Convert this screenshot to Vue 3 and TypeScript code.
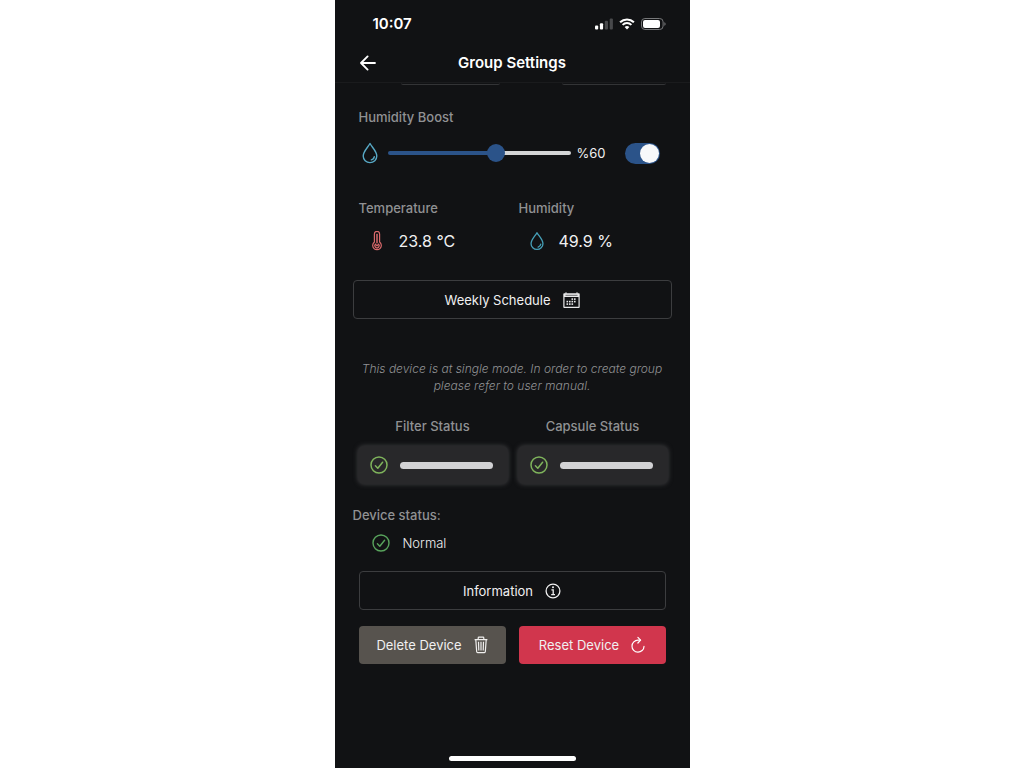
<script setup lang="ts">
import { ref, computed } from 'vue'

const boost = ref(60)
const boostOn = ref(true)
const fill = computed(() => ({ '--fill': `${boost.value}%` }))
const statuses = ['Filter Status', 'Capsule Status']
</script>

<template>
  <main class="phone">
    <div class="status-bar">
      <span class="time">10:07</span>
      <div class="indicators">
        <svg width="18" height="12" viewBox="0 0 18 12" aria-hidden="true">
          <rect x="0" y="7.5" width="3.2" height="4" rx="1" fill="#fff" />
          <rect x="4.9" y="5.3" width="3.2" height="6.2" rx="1" fill="#fff" />
          <rect x="9.8" y="2.8" width="3.2" height="8.7" rx="1" fill="#48494b" />
          <rect x="14.7" y="0.4" width="3.2" height="11.1" rx="1" fill="#48494b" />
        </svg>
        <svg width="16" height="12" viewBox="0 0 16 12" aria-hidden="true" fill="none" stroke="#fff">
          <path d="M1.1 4.3a9.9 9.9 0 0 1 13.8 0" stroke-width="2.1" />
          <path d="M3.6 6.9a6.3 6.3 0 0 1 8.8 0" stroke-width="2" />
          <path d="M8 11.6 5.6 9.1a3.5 3.5 0 0 1 4.8 0z" fill="#fff" stroke="none" />
        </svg>
        <svg width="25" height="12" viewBox="0 0 25 12" aria-hidden="true">
          <rect x="0.5" y="0.5" width="21.6" height="11" rx="3.4" fill="none" stroke="#77787a" />
          <rect x="2" y="2" width="17" height="8" rx="2" fill="#fff" />
          <path d="M23.4 4.2v3.6c.8-.3 1.2-1 1.2-1.8s-.4-1.5-1.2-1.8z" fill="#77787a" />
        </svg>
      </div>
    </div>

    <header class="nav">
      <button class="back" type="button" aria-label="Back">
        <svg width="16" height="16" viewBox="0 0 16 16" fill="none" stroke="#fff" stroke-width="1.8" stroke-linecap="round" stroke-linejoin="round">
          <path d="M15 8H1.2M7.6 1.4 1 8l6.6 6.6" />
        </svg>
      </button>
      <h1>Group Settings</h1>
    </header>

    <div class="fields-edge"><i></i><i></i></div>

    <section class="inset boost">
      <label class="caption" for="boost">Humidity Boost</label>
      <div class="boost-row">
        <svg class="drop" width="16" height="22" viewBox="0 0 16 22" fill="none" stroke="#58a9c6" stroke-width="1.4" stroke-linecap="round" stroke-linejoin="round">
          <path d="M8 1.5C6 5.2 1.2 9.4 1.2 14a6.8 6.6 0 0 0 13.6 0C14.8 9.4 10 5.2 8 1.5z" />
          <path d="M12.3 14.6a4 4 0 0 1-3 3.3" />
        </svg>
        <input id="boost" v-model.number="boost" class="slider" type="range" min="0" max="100" :style="fill" />
        <output for="boost">%{{ boost }}</output>
        <input v-model="boostOn" class="toggle" type="checkbox" role="switch" aria-label="Humidity Boost on" />
      </div>
    </section>

    <section class="inset readings">
      <div>
        <h2 class="caption">Temperature</h2>
        <p class="reading">
          <svg width="14" height="20" viewBox="0 0 14 20" fill="none" stroke="#d9696b" stroke-width="1.2" stroke-linecap="round">
            <path d="M4.4 11V3a2.6 2.6 0 0 1 5.2 0v8a4.3 4.3 0 1 1-5.2 0z" />
            <path d="M7 3.4v8.3" stroke-width="1.5" />
            <path d="M5.3 13.2a2.2 2.2 0 1 0 3.4 0L7 14.6z" />
          </svg>
          23.8 °C
        </p>
      </div>
      <div>
        <h2 class="caption">Humidity</h2>
        <p class="reading">
          <svg width="14" height="20" viewBox="0 0 16 22" fill="none" stroke="#46a0b8" stroke-width="1.5" stroke-linecap="round" stroke-linejoin="round">
            <path d="M8 1.5C6 5.2 1.2 9.4 1.2 14a6.8 6.6 0 0 0 13.6 0C14.8 9.4 10 5.2 8 1.5z" />
            <path d="M12.3 14.6a4 4 0 0 1-3 3.3" />
          </svg>
          49.9 %
        </p>
      </div>
    </section>

    <button class="outline weekly" type="button">
      Weekly Schedule
      <svg width="17" height="16" viewBox="0 0 17 16">
        <path d="M2.5 0.3h1v.9h10v-.9h1v.9h1.3q.9 0 .9.9V15q0 .9-.9.9H1.2Q.3 15.900.3 15V2.100q0-.9.9-.9h1.300zM1.500 5v9.700h14V5z" fill="#e9e9ea" fill-rule="evenodd" />
        <path d="M2.5 3.3h12" stroke="#6b6c6e" stroke-width="1" />
        <g fill="#e9e9ea">
          <rect x="8.5" y="6.3" width="1.6" height="1.6" /><rect x="11" y="6.3" width="1.6" height="1.6" />
          <rect x="3.5" y="8.8" width="1.6" height="1.6" /><rect x="6" y="8.8" width="1.6" height="1.6" /><rect x="8.5" y="8.8" width="1.6" height="1.6" /><rect x="11" y="8.8" width="1.6" height="1.6" />
          <rect x="3.5" y="11.3" width="1.6" height="1.6" /><rect x="6" y="11.3" width="1.6" height="1.6" /><rect x="8.5" y="11.3" width="1.6" height="1.6" />
        </g>
      </svg>
    </button>

    <p class="note">This device is at single mode. In order to create group please refer to user manual.</p>

    <section class="statuses">
      <div v-for="name in statuses" :key="name">
        <h2 class="caption">{{ name }}</h2>
        <div class="card">
          <svg width="18" height="18" viewBox="0 0 18 18" fill="none" stroke="#7fb45c" stroke-width="1.5" stroke-linecap="round" stroke-linejoin="round">
            <circle cx="9" cy="9" r="8" />
            <path d="m5.4 9.7 2.4 2.5 4.8-6" />
          </svg>
          <span class="bar"></span>
        </div>
      </div>
    </section>

    <section class="device">
      <h2 class="caption">Device status:</h2>
      <p class="normal">
        <svg width="18" height="18" viewBox="0 0 18 18" fill="none" stroke="#58a35c" stroke-width="1.4" stroke-linecap="round" stroke-linejoin="round">
          <circle cx="9" cy="9" r="8" />
          <path d="m5.4 9.7 2.4 2.5 4.8-6" />
        </svg>
        Normal
      </p>
    </section>

    <section class="inset actions">
      <button class="outline" type="button">
        Information
        <svg width="16" height="16" viewBox="0 0 16 16" fill="none" stroke="#f0f0f0" stroke-width="1.3">
          <circle cx="8" cy="8" r="6.9" />
          <path d="M6.4 6.8h1.8v4.7M6.2 11.7h3.8" />
          <circle cx="8" cy="4.3" r="1" fill="#f0f0f0" stroke="none" />
        </svg>
      </button>
      <div class="pair">
        <button class="delete" type="button">
          Delete Device
          <svg width="14" height="18" viewBox="1 0 14 18" fill="none" stroke="#f0efee" stroke-width="1.2" stroke-linejoin="round">
            <path d="M1.6 3.6h12.8M5.2 3.4V2q0-.8.8-.8h4q.8 0 .8.8v1.4M2.800 3.800l.9 12q.1.900.9.900h6.800q.8 0 .9-.9l.9-12" />
            <path d="m5.5 5.8.3 8.6M8 5.8v8.6m2.5-8.6-.3 8.6" />
          </svg>
        </button>
        <button class="reset" type="button">
          Reset Device
          <svg width="14" height="18" viewBox="1 0 14 18" fill="none" stroke="#fff" stroke-width="1.2" stroke-linecap="round" stroke-linejoin="round">
            <path d="M10.3 4.2H8a6 6 0 1 0 6 6.2" />
            <path d="M7.900 1.400l2.700 2.800-2.700 2.800" />
          </svg>
        </button>
      </div>
    </section>

    <div class="home"></div>
  </main>
</template>

<style>
body {
  margin: 0;
  background: #fff;
}
</style>

<style scoped>
.phone {
  box-sizing: border-box;
  display: flex;
  flex-direction: column;
  max-width: 355px;
  min-height: 100vh;
  margin: 0 auto;
  background: #111214;
  color: #f0f0f1;
  font-family: Inter, "Liberation Sans", sans-serif;
  font-size: 13px;
}
h1, h2, p {
  margin: 0;
}
svg {
  display: block;
  flex: none;
}
button {
  display: flex;
  align-items: center;
  justify-content: center;
  gap: 12px;
  box-sizing: border-box;
  padding: 0;
  border: 0;
  border-radius: 4px;
  background: none;
  color: #f0f0f1;
  font: inherit;
}
.status-bar {
  display: flex;
  align-items: center;
  justify-content: space-between;
  height: 47px;
  padding: 0 24px 0 38px;
}
.time {
  font-size: 15px;
  font-weight: 600;
  color: #fff;
}
.indicators {
  display: flex;
  align-items: center;
  gap: 6px;
}
.nav {
  box-sizing: border-box;
  display: grid;
  grid-template-columns: 24px 1fr 24px;
  align-items: center;
  height: 36px;
  padding: 0 21px 4px;
  border-bottom: 1px solid #1a1b1d;
}
.back {
  height: 24px;
}
h1 {
  grid-column: 2;
  text-align: center;
  font-size: 15px;
  font-weight: 600;
  line-height: 20px;
  color: #fff;
}
.fields-edge {
  display: flex;
  justify-content: flex-end;
  gap: 62px;
  padding: 0 24px;
}
.fields-edge i {
  width: 104px;
  height: 1px;
  border-bottom: 1px solid #333436;
  border-radius: 0 0 3px 3px;
}
.fields-edge i:first-child {
  width: 99px;
}
.inset {
  margin: 0 24px;
}
.caption {
  display: block;
  color: #909193;
  font-size: 13px;
  font-weight: 500;
  line-height: 18px;
}
.boost {
  margin-top: 23px;
}
.boost-row {
  display: flex;
  align-items: center;
  height: 24px;
  margin-top: 15px;
  padding: 0 6px 0 3px;
}
.slider {
  flex: 1;
  min-width: 0;
  height: 20px;
  margin: 0 6px 0 10px;
  appearance: none;
  background: none;
}
.slider::-webkit-slider-runnable-track {
  height: 4px;
  border-radius: 2px;
  background: linear-gradient(to right, #2b5389 var(--fill), #d4d5d6 var(--fill));
}
.slider::-webkit-slider-thumb {
  appearance: none;
  width: 18px;
  height: 18px;
  margin-top: -7px;
  border-radius: 50%;
  background: #2b5389;
}
output {
  width: 48px;
}
.toggle {
  display: flex;
  box-sizing: border-box;
  width: 35px;
  height: 21px;
  margin: 0;
  padding: 1px;
  appearance: none;
  border-radius: 11px;
  background: #4a4b4d;
}
.toggle::before {
  content: "";
  width: 19px;
  height: 19px;
  border-radius: 50%;
  background: #f7f8fa;
}
.toggle:checked {
  justify-content: flex-end;
  background: #2b5389;
}
.readings {
  display: grid;
  grid-template-columns: 1fr 1fr;
  gap: 13px;
  margin-top: 34px;
}
.reading {
  display: flex;
  align-items: center;
  gap: 15px;
  height: 24px;
  margin-top: 12px;
  padding-left: 11px;
  font-size: 16px;
}
.outline {
  width: 100%;
  height: 39px;
  border: 1px solid #3c3d3f;
}
.weekly {
  width: auto;
  margin: 27px 18px 0;
}
.note {
  margin: 41px 24px 0;
  color: #909193;
  font-size: 12px;
  font-style: italic;
  font-weight: 300;
  line-height: 17px;
  text-align: center;
}
.statuses {
  display: grid;
  grid-template-columns: 1fr 1fr;
  gap: 10px;
  margin: 23px 22px 0 23px;
  text-align: center;
}
.card {
  display: flex;
  align-items: center;
  gap: 12px;
  height: 38px;
  margin-top: 11px;
  padding: 0 15px 0 12px;
  border-radius: 6px;
  background: #28282a;
  box-shadow: 0 0 5px #434446;
}
.bar {
  flex: 1;
  height: 7px;
  border-radius: 4px;
  background: #d2d2d4;
}
.device {
  margin: 22px 18px 0;
}
.normal {
  display: flex;
  align-items: center;
  gap: 13px;
  height: 20px;
  margin-top: 9px;
  padding-left: 19px;
  font-weight: 300;
}
.actions {
  margin-top: 18px;
}
.pair {
  display: grid;
  grid-template-columns: 1fr 1fr;
  gap: 13px;
  margin-top: 16px;
}
.pair button {
  height: 38px;
}
.delete {
  background: #57534e;
}
.reset {
  background: #d1364d;
}
.home {
  width: 127px;
  height: 5px;
  margin: auto auto 7px;
  border-radius: 3px;
  background: #fff;
}
</style>
